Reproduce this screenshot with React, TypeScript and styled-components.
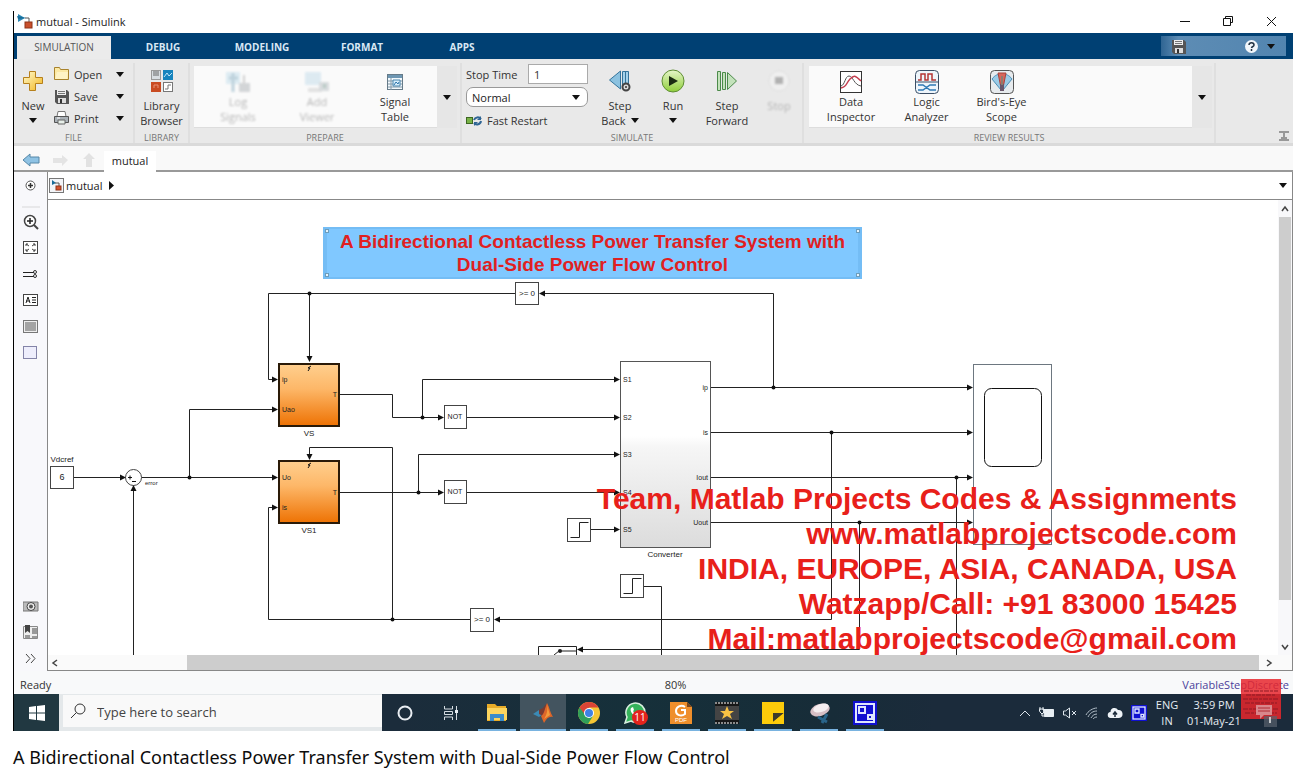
import React from "react";
import styled, { createGlobalStyle, css } from "styled-components";

const uiFont = `"Open Sans", "Noto Sans", sans-serif`;

const GlobalStyle = createGlobalStyle`
  * { box-sizing: border-box; }
  body { margin: 0; background: #fff; color: #222; font-family: ${uiFont}; font-size: 11px; }
  button, input, select { font: inherit; color: inherit; }
  button { border: 0; padding: 0; background: none; }
  svg { display: block; flex: none; }
`;

const Page = styled.main`
  padding: 11px 12px 0 13px;
`;

const AppWindow = styled.section`
  display: flex;
  flex-direction: column;
  border-left: 1px solid #000;
`;

/* Title bar */

const TitleBar = styled.header`
  display: flex;
  align-items: center;
  height: 22px;
  padding: 0 16px 2px 3px;
  gap: 3px;
`;

const WindowTitle = styled.h1`
  flex: 1;
  margin: 0;
  font-size: 11px;
  font-weight: 400;
`;

const WindowControls = styled.div`
  display: flex;
  gap: 32px;
`;

/* Ribbon tabs */

const TabBar = styled.nav`
  display: flex;
  align-items: stretch;
  height: 26px;
  padding: 3px 7px 0 3px;
  background: #004073;
`;

const RibbonTab = styled.button<{ $active?: boolean; $width: number }>`
  width: ${(p) => p.$width}px;
  padding-bottom: 2px;
  font-size: 10px;
  font-weight: ${(p) => (p.$active ? 400 : 700)};
  color: ${(p) => (p.$active ? "#555" : "#d9e8f5")};
  background: ${(p) => (p.$active ? "#ebebeb" : "transparent")};
`;

const QuickAccess = styled.div`
  display: flex;
  align-items: center;
  justify-content: space-between;
  width: 125px;
  height: 20px;
  margin-left: auto;
  padding: 0 11px 0 10px;
  background: linear-gradient(90deg, #2f6593, #5d8cb4 14%, #5285b0);
`;

const QuickRight = styled.div`
  display: flex;
  align-items: center;
  gap: 9px;
`;

/* Ribbon */

const Ribbon = styled.div`
  display: flex;
  height: 87px;
  padding-top: 4px;
  background: #e9e9e9;
  border-bottom: 3px solid #dadada;
`;

const Section = styled.section<{ $width?: number }>`
  display: flex;
  flex-direction: column;
  flex: ${(p) => (p.$width ? "none" : 1)};
  width: ${(p) => (p.$width ? `${p.$width}px` : "auto")};
  border-right: ${(p) => (p.$width ? "2px solid #dfdfdf" : "0")};
`;

const SectionBody = styled.div<{ $pad?: string }>`
  display: flex;
  flex: none;
  height: 68px;
  padding: ${(p) => p.$pad ?? "0"};
`;

const SectionLabel = styled.h2`
  margin: 0;
  font-size: 9px;
  line-height: 14px;
  font-weight: 400;
  text-align: center;
  color: #777;
`;

const BigButton = styled.button<{ $width: number; $faded?: boolean }>`
  display: flex;
  flex-direction: column;
  align-items: center;
  width: ${(p) => p.$width}px;
  padding-top: 6px;
  line-height: 15px;
  color: #333;
  ${(p) =>
    p.$faded &&
    css`
      opacity: 0.3;
      filter: blur(1px);
    `}
`;

const BigIcon = styled.span`
  display: grid;
  place-items: center;
  width: 24px;
  height: 24px;
  margin-bottom: 5px;
`;

const InlineArrow = styled.span`
  display: flex;
  align-items: center;
  justify-content: center;
  gap: 5px;
  min-height: 15px;
`;

const SmallColumn = styled.div`
  display: flex;
  flex-direction: column;
  width: 72px;
  padding-left: 2px;
`;

const SmallButton = styled.button`
  display: flex;
  align-items: center;
  gap: 5px;
  height: 22px;
  text-align: left;
  color: #333;
`;

const SmallText = styled.span`
  flex: 1;
`;

const Gallery = styled.div<{ $inset?: number }>`
  display: flex;
  flex: 1;
  height: 62px;
  background: #fafafa;
  border-bottom: 1px solid #ddd;
  padding-left: ${(p) => p.$inset ?? 0}px;
`;

const GalleryItem = styled.button<{ $faded?: boolean; $width: number }>`
  display: flex;
  flex-direction: column;
  align-items: center;
  width: ${(p) => p.$width}px;
  padding-top: 4px;
  line-height: 15px;
  color: #333;
  ${(p) =>
    p.$faded &&
    css`
      opacity: 0.35;
      filter: blur(1px);
    `}
`;

const GalleryIcon = styled.span`
  display: grid;
  place-items: center;
  height: 24px;
`;

const GalleryMore = styled.button`
  display: grid;
  place-items: center;
  width: 20px;
  height: 62px;
  background: #e6e6e6;
`;

const RunSettings = styled.div`
  display: flex;
  flex-direction: column;
  width: 122px;
  gap: 3px;
  padding-top: 1px;
`;

const StopTimeRow = styled.label`
  display: flex;
  align-items: center;
  justify-content: space-between;
  height: 20px;
  color: #333;
`;

const StopTimeInput = styled.input`
  width: 60px;
  height: 20px;
  padding: 0 5px;
  border: 1px solid #aaa;
  background: #fff;
`;

const ModeBox = styled.div`
  display: flex;
  align-items: center;
  height: 21px;
  padding-right: 7px;
  border: 1px solid #999;
  border-radius: 7px;
  background: #fff;
`;

const ModeSelect = styled.select`
  flex: 1;
  height: 18px;
  padding: 0 5px;
  border: 0;
  appearance: none;
  background: transparent;
`;

const RibbonEnd = styled.div`
  display: flex;
  flex: 1;
  align-items: flex-end;
  justify-content: flex-end;
  padding: 0 3px 1px 0;
`;

/* Document bar */

const DocumentBar = styled.div`
  display: flex;
  align-items: stretch;
  height: 26px;
  padding: 0 0 0 8px;
  background: #f9f9f9;
  border-bottom: 2px solid #999;
`;

const NavButtons = styled.div`
  display: flex;
  align-items: center;
  gap: 11px;
  width: 82px;
  padding-top: 4px;
`;

const NavButton = styled.button`
  width: 18px;
`;

const DocumentTab = styled.button`
  width: 52px;
  margin: 5px 0 -2px;
  padding-bottom: 2px;
  background: #fff;
`;

/* Editor */

const Editor = styled.div`
  display: flex;
`;

const Palette = styled.aside`
  display: flex;
  flex-direction: column;
  align-items: center;
  width: 33px;
  padding-top: 4px;
  background: #f8f8fb;
`;

const PaletteButton = styled.button`
  display: grid;
  place-items: center;
  width: 20px;
  height: 18px;
  margin-bottom: 8px;
  &:last-child { margin-bottom: 4px; }
`;

const PaletteRule = styled.hr`
  width: 18px;
  height: 2px;
  margin: 4px 0 5px;
  border: 0;
  background: #e8e8ea;
`;

const PaletteSpacer = styled.div`
  flex: 1;
`;

const EditorMain = styled.div`
  display: flex;
  flex-direction: column;
  flex: 1;
  min-width: 0;
  border: 1px solid #888;
  border-top: 0;
`;

const Breadcrumb = styled.div`
  display: flex;
  align-items: center;
  gap: 2px;
  height: 28px;
  padding: 0 5px 0 1px;
  border-bottom: 1px solid #888;
  background: #fff;
`;

const BreadcrumbFill = styled.span`
  flex: 1;
`;

const CanvasRow = styled.div`
  display: flex;
`;

const Canvas = styled.div`
  position: relative;
  flex: 1;
  min-width: 0;
  overflow: hidden;
  background: #fff;
`;

const Annotation = styled.p`
  position: absolute;
  left: 275px;
  top: 27px;
  width: 539px;
  height: 52px;
  margin: 0;
  padding-top: 1px;
  border: 4px solid #74bdf5;
  border-width: 2px 4px;
  background: #80c8ff;
  color: #e01f22;
  font: bold 19px/23px "Liberation Sans", Arial, sans-serif;
  text-align: center;
  white-space: nowrap;
`;

const Handle = styled.i<{ $right?: boolean; $bottom?: boolean }>`
  position: absolute;
  width: 4px;
  height: 4px;
  border: 1px solid #6d9dbb;
  background: #e4f4ff;
  ${(p) => (p.$right ? "right: -2px;" : "left: -2px;")}
  ${(p) => (p.$bottom ? "bottom: 0;" : "top: 0;")}
`;

const Watermark = styled.address`
  position: absolute;
  right: 41px;
  top: 281px;
  color: #e8201a;
  font: bold 30px/35px "Liberation Sans", Arial, sans-serif;
  text-align: right;
  white-space: nowrap;
`;

const VScroll = styled.div`
  display: flex;
  flex-direction: column;
  align-items: center;
  justify-content: space-between;
  width: 14px;
  padding: 5px 0 4px;
  background: #f8f8fa;
`;

const VThumb = styled.div`
  flex: 1;
  width: 12px;
  margin: 4px 0 43px;
  background: #cdcdcd;
`;

const HScroll = styled.div`
  display: flex;
  align-items: center;
  height: 15px;
  padding: 0 19px 0 3px;
  background: #fafafa;
`;

const HThumb = styled.div`
  flex: 1;
  height: 15px;
  margin: 0 6px 0 128px;
  background: #cdcdcd;
`;

const StatusBar = styled.footer`
  display: grid;
  grid-template-columns: 1fr auto 1fr;
  align-items: center;
  height: 23px;
  padding: 4px 4px 0 6px;
  background: #f8f9fa;
  color: #333;
`;

const Solver = styled.a`
  color: #4b3f9a;
  text-align: right;
  text-decoration: none;
`;

const CanvasZoom = styled.span`
  padding-left: 42px;
`;

/* Taskbar */

const Taskbar = styled.div`
  display: flex;
  height: 37px;
  background: linear-gradient(90deg, #1b2c3b 30%, #16303a 48%, #172c38 64%, #1b2b3b 72%);
  color: #e6ecf2;
`;

const StartButton = styled.button`
  display: grid;
  place-items: center;
  width: 45px;
  background: #213841;
`;

const SearchBox = styled.label`
  display: flex;
  align-items: center;
  gap: 9px;
  width: 323px;
  padding: 0 8px 0 7px;
  border: solid #e4e8ea;
  border-width: 1px 0 4px 4px;
  background: #f9f9f9;
  color: #333;
`;

const SearchInput = styled.input`
  flex: 1;
  min-width: 0;
  padding: 2px 0 0 2px;
  border: 0;
  background: transparent;
  font-size: 13px;
  &::placeholder { color: #444; opacity: 1; }
`;

const TaskButton = styled.button<{ $open?: boolean; $current?: boolean }>`
  display: flex;
  flex-direction: column;
  align-items: center;
  justify-content: center;
  position: relative;
  width: 46px;
  background: ${(p) => (p.$current ? "#43545f" : "transparent")};
  ${(p) =>
    p.$open &&
    css`
      &::after {
        content: "";
        position: absolute;
        bottom: 0;
        width: ${p.$current ? "46px" : "38px"};
        height: 2px;
        background: #79b3e0;
      }
    `}
`;

const Badge = styled.span`
  position: absolute;
  left: 20px;
  top: 16px;
  width: 16px;
  height: 15px;
  border-radius: 8px;
  background: #e3231c;
  color: #fff;
  font-size: 10px;
  line-height: 15px;
`;

const Tray = styled.div`
  display: flex;
  align-items: center;
  gap: 8px;
  margin-left: auto;
`;

const TrayText = styled.div<{ $width: number }>`
  width: ${(p) => p.$width}px;
  line-height: 16px;
  text-align: center;
`;

const TrayClock = styled.div`
  display: flex;
  gap: 5px;
`;

const ActionCenter = styled.button`
  position: relative;
  align-self: stretch;
  width: 49px;
  margin-left: -8px;
`;

const RedNote = styled.span`
  position: absolute;
  left: -3px;
  top: -15px;
`;

const Caption = styled.h2`
  margin: 13px 0 0;
  font: 400 18px/26px "Noto Sans", sans-serif;
  color: #0c0c0c;
`;

/* Icons */

const Down = ({ fill = "#111" }: { fill?: string }) => (
  <svg width="8" height="5" viewBox="0 0 8 5"><path d="M0 0h8L4 5z" fill={fill} /></svg>
);

const ModelIcon = () => (
  <svg width="16" height="15" viewBox="0 0 16 15">
    <path d="M1 0v8l7-4z" fill="#2a87b4" />
    <path d="M0 2l9 2-8 1z" fill="#176b98" />
    <path d="M8 4h4v4" fill="none" stroke="#555" />
    <rect x="8" y="8" width="7" height="6" fill="#c9502c" stroke="#8f3316" />
  </svg>
);

const FramedModelIcon = () => (
  <svg width="15" height="15" viewBox="0 0 15 15">
    <rect x=".5" y=".5" width="14" height="14" fill="#f3f5f8" stroke="#777" />
    <path d="M3 2v5l4-2z" fill="#176b98" />
    <path d="M6 5h4v3" fill="none" stroke="#555" />
    <rect x="7" y="8" width="5" height="4" fill="#d4522d" stroke="#8f3316" />
  </svg>
);

const NewIcon = () => (
  <svg width="22" height="22" viewBox="0 0 22 22">
    <defs><linearGradient id="gold" x1="0" y1="0" x2="1" y2="1"><stop stopColor="#fffbd0" /><stop offset="1" stopColor="#f2b51d" /></linearGradient></defs>
    <path d="M7.500 1.500h6v6h7v6h-7v7h-6v-7h-6v-6h6z" fill="url(#gold)" stroke="#b6801c" />
  </svg>
);

const OpenIcon = () => (
  <svg width="15" height="14" viewBox="0 0 15 14">
    <path d="M.5 12.500v-12h5l1 2h8v10z" fill="#fce9a4" stroke="#a8822c" />
    <path d="M3 5h11l-1 7H1z" fill="#fff3c4" />
  </svg>
);

const SaveIcon = () => (
  <svg width="15" height="15" viewBox="0 0 15 15">
    <path d="M1 1h12l2 2v12H3l-2-2z" fill="#555" />
    <path d="M3 1h9v5H3z" fill="#eee" /><path d="M4 2.500h7M4 4.500h7" stroke="#777" />
    <path d="M4 9h8v5H4z" fill="#ddd" /><path d="M6 10h2v4H6z" fill="#333" />
  </svg>
);

const PrintIcon = () => (
  <svg width="15" height="14" viewBox="0 0 15 14">
    <path d="M4 .5h7l1 5H3z" fill="#fff" stroke="#777" />
    <path d="M.5 5.500h14v6H.5z" fill="#aab1b7" stroke="#555" />
    <path d="M4 9h7v4H4z" fill="#e7efe9" stroke="#666" /><path d="M3 7h3" stroke="#fff" />
  </svg>
);

const LibraryIcon = () => (
  <svg width="22" height="22" viewBox="0 0 22 22">
    <rect x=".5" y=".5" width="9" height="9" fill="#d8dde1" stroke="#999" /><path d="M3 1v5M5 1v5M7 1v5" stroke="#666" />
    <rect x="12" y="0" width="10" height="10" fill="#1683bd" /><path d="M13 7l3-4 2 3 3-3" stroke="#bfe5fa" fill="none" />
    <rect x="0" y="12" width="10" height="10" fill="#c94b22" /><path d="M3 18v-3h4v3" stroke="#e99275" fill="none" />
    <rect x="12.500" y="12.500" width="9" height="9" fill="#fff" stroke="#777" /><path d="M14 19h3v-4h3" stroke="#777" fill="none" />
  </svg>
);

const PaleSignalIcon = () => (
  <svg width="26" height="24" viewBox="0 0 26 24">
    <path d="M1 2h14v12H1z" fill="#a8d1e5" /><path d="M8 3v19M4 8h9" stroke="#518aa6" strokeWidth="3" />
    <path d="M14 13h11v9H14z" fill="#8c9399" /><path d="M19 5v9" stroke="#888" strokeWidth="2" />
  </svg>
);

const PaleViewerIcon = () => (
  <svg width="26" height="24" viewBox="0 0 26 24">
    <path d="M1 2h16v13H1z" fill="#a8cfe3" /><path d="M4 18h14v4H4z" fill="#b5b5b5" />
    <path d="M15 12h10v9H15z" fill="#9aa4aa" /><path d="M19 14h3v4h-3z" fill="#476" />
  </svg>
);

const SignalTableIcon = () => (
  <svg width="16" height="16" viewBox="0 0 16 16">
    <rect x=".5" y=".5" width="15" height="15" fill="#f3f9fd" stroke="#667b89" />
    <path d="M1 1h14v3H1z" fill="#6e97b3" /><path d="M1 7h14M1 10h14M1 13h14M4 4v12" stroke="#8299a8" />
    <path d="M6 6h7v6H6z" fill="#d5ecfa" stroke="#4a86ad" /><path d="M7 11l2-3 2 2 1-2" fill="none" stroke="#2f78ae" />
  </svg>
);

const RestartIcon = () => (
  <svg width="16" height="12" viewBox="0 0 16 12">
    <rect x=".5" y="2.500" width="6" height="6" fill="#79b347" stroke="#3d6722" />
    <path d="M8 5a4 4 0 0 1 7-1M15 6a4 4 0 0 1-7 2" fill="none" stroke="#2f6594" strokeWidth="2" />
    <path d="M15 1v4h-4zM8 11V7h4z" fill="#2f6594" />
  </svg>
);

const StepBackIcon = () => (
  <svg width="22" height="22" viewBox="0 0 22 22">
    <path d="M11.500 1v18L.5 10z" fill="#8cc2e0" stroke="#35749b" />
    <path d="M13.500 1.500h6v17h-6z" fill="#a6d2ea" stroke="#35749b" /><path d="M16.500 2v14" stroke="#35749b" />
    <circle cx="17" cy="17" r="3.500" fill="#ddd" stroke="#444" strokeWidth="2" /><circle cx="17" cy="17" r="1" fill="#333" />
  </svg>
);

const RunIcon = () => (
  <svg width="24" height="24" viewBox="0 0 24 24">
    <defs><linearGradient id="run" x1="0" y1="0" x2="0" y2="1"><stop stopColor="#e6f6c9" /><stop offset="1" stopColor="#8fce3a" /></linearGradient></defs>
    <circle cx="12" cy="12" r="11" fill="url(#run)" stroke="#5e8d33" />
    <path d="M8 7l9 5-9 5z" fill="#1b2c12" />
  </svg>
);

const StepForwardIcon = () => (
  <svg width="22" height="22" viewBox="0 0 22 22">
    <path d="M1.500 1.500h3v19h-3zM6.500 2.500h3v17h-3z" fill="#c3e2bb" stroke="#4c8a4a" />
    <path d="M11.500 2.500v17l9-8.500z" fill="#c3e2bb" stroke="#4c8a4a" />
  </svg>
);

const StopIcon = () => (
  <svg width="24" height="24" viewBox="0 0 24 24">
    <circle cx="12" cy="12" r="10" fill="#fff" stroke="#c5c5c5" /><rect x="8" y="8" width="8" height="7" fill="#333" />
  </svg>
);

const DataInspectorIcon = () => (
  <svg width="22" height="22" viewBox="0 0 22 22">
    <rect x=".5" y=".5" width="21" height="21" fill="#fff" stroke="#333" />
    <path d="M1 15C5 14 5 5 9 5s5 9 12 10" fill="none" stroke="#555" />
    <path d="M1 17c6-1 5-5 9-9s5-4 11 2" fill="none" stroke="#c33d4e" strokeWidth="1.500" />
  </svg>
);

const LogicIcon = () => (
  <svg width="24" height="24" viewBox="0 0 24 24">
    <rect x=".5" y=".5" width="23" height="23" rx="4" fill="#eef5fb" stroke="#3b4e66" />
    <path d="M3 10h3V4h4v6h3V4h4v6h4" fill="none" stroke="#b53434" strokeWidth="1.500" />
    <path d="M1 12h22" stroke="#3b4e66" /><path d="M3 15h5l7 5h6M3 20h5l7-5h6" fill="none" stroke="#2f79b5" strokeWidth="1.500" />
  </svg>
);

const BirdsEyeIcon = () => (
  <svg width="24" height="24" viewBox="0 0 24 24">
    <rect x=".5" y=".5" width="23" height="23" rx="4" fill="#e7ebee" stroke="#555" />
    <path d="M2 9c3-4 6-5 10-5s7 1 10 5l-9 11h-2z" fill="#9bcbe6" stroke="#4b8eb7" />
    <path d="M8 3h8l-3 15h-2z" fill="#d8665b" stroke="#a8433c" /><path d="M10 14h4v7h-4z" fill="#69566c" /><path d="M11 6h2v9h-2z" fill="#8e7c70" />
  </svg>
);

const StepGlyph = ({ x, y }: { x: number; y: number }) => (
  <g fill="none">
    <rect x={x} y={y} width="23" height="23" fill="#fff" stroke="#444" />
    <path d={`M${x + 3} ${y + 19}h9v-15h9`} stroke="#222" />
  </g>
);

/* Block diagram */

const wires = [
  "M515 293.500H268.500V379.500H272", "M309.500 293.500V357", "M773.500 387.500V293.500H545",
  "M340 394.500H392.500V417.500H438", "M422.500 417.500V379.500H614", "M467 417.500H614",
  "M392.500 619.500V447.500H309.500V454", "M340 492.500H438", "M418.500 492.500V454.500H614", "M467 492.500H614",
  "M73 477.500H120", "M141 477.500H272", "M189.500 477.500V409.500H272", "M133.500 655V491",
  "M470 619.500H268.500V507.500H272", "M831.500 432.500V619.500H500",
  "M711 387.500H967", "M711 432.500H967", "M711 477.500H967", "M711 522.500H967",
  "M956.500 477.500V655", "M859.500 522.500V649.500H583", "M591 529.500H614", "M643 586.500H661.500V655",
];

const dots = [[309.5, 293.5], [422.5, 417.5], [418.5, 492.5], [189.5, 477.5], [392.5, 619.5], [773.5, 387.5], [831.5, 432.5], [956.5, 477.5], [859.5, 522.5]];

const arrows: [number, number, number][] = [
  [278, 379.5, 0], [278, 409.5, 0], [278, 477.5, 0], [278, 507.5, 0], [126, 477.5, 0], [444, 417.5, 0], [444, 492.5, 0],
  [620, 379.5, 0], [620, 417.5, 0], [620, 454.5, 0], [620, 492.5, 0], [620, 529.5, 0],
  [973, 387.5, 0], [973, 432.5, 0], [973, 477.5, 0], [973, 522.5, 0],
  [309.5, 362, 90], [309.5, 460, 90], [133.5, 485, -90], [539, 293.5, 180], [494, 619.5, 180], [577, 649.5, 180],
];

const labels: { x: number; y: number; t: string; s?: number; a?: "middle" | "end" }[] = [
  { x: 282, y: 382, t: "ip" }, { x: 282, y: 412, t: "Uao" }, { x: 337, y: 397, t: "T", a: "end" },
  { x: 282, y: 480, t: "Uo" }, { x: 282, y: 510, t: "is" }, { x: 337, y: 495, t: "T", a: "end" },
  { x: 309, y: 436, t: "VS", a: "middle", s: 8 }, { x: 309, y: 533, t: "VS1", a: "middle", s: 8 },
  { x: 62, y: 462, t: "Vdcref", a: "middle", s: 8 }, { x: 62, y: 480, t: "6", a: "middle", s: 9 }, { x: 145, y: 485, t: "error", s: 6 },
  { x: 455, y: 419, t: "NOT", a: "middle", s: 7 }, { x: 455, y: 494, t: "NOT", a: "middle", s: 7 },
  { x: 527, y: 296, t: ">= 0", a: "middle", s: 8 }, { x: 482, y: 622, t: ">= 0", a: "middle", s: 8 },
  { x: 623, y: 382, t: "S1" }, { x: 623, y: 420, t: "S2" }, { x: 623, y: 457, t: "S3" }, { x: 623, y: 495, t: "S4" }, { x: 623, y: 532, t: "S5" },
  { x: 708, y: 390, t: "ip", a: "end" }, { x: 708, y: 435, t: "is", a: "end" }, { x: 708, y: 480, t: "Iout", a: "end" }, { x: 708, y: 525, t: "Uout", a: "end" },
  { x: 665, y: 557, t: "Converter", a: "middle", s: 8 },
];

const Diagram = () => (
  <svg width="1230" height="455" viewBox="48 200 1230 455" role="img" aria-label="Block diagram">
    <defs>
      <linearGradient id="orange" x1="0" y1="0" x2="0" y2="1"><stop stopColor="#ffcf8e" /><stop offset=".4" stopColor="#fdb768" /><stop offset="1" stopColor="#ee7203" /></linearGradient>
      <linearGradient id="grey" x1="0" y1="0" x2="0" y2="1"><stop offset=".4" stopColor="#fff" /><stop offset=".46" stopColor="#f6f6f6" /><stop offset="1" stopColor="#dcdcdc" /></linearGradient>
    </defs>
    <g fill="none" stroke="#222">{wires.map((d) => <path key={d} d={d} />)}</g>
    <g fill="url(#orange)" stroke="#2a1a08" strokeWidth="2">
      <rect x="279" y="364" width="60" height="62" /><rect x="279" y="461" width="60" height="62" />
    </g>
    <path d="M311 366l-3 2h2l-2 3M311 463l-3 2h2l-2 3" fill="none" stroke="#111" />
    <rect x="620.500" y="361.500" width="90" height="186" fill="url(#grey)" stroke="#555" />
    <g fill="#fff" stroke="#444">
      <rect x="444.500" y="405.500" width="22" height="23" /><rect x="444.500" y="480.500" width="22" height="23" />
      <rect x="50.500" y="466.500" width="23" height="22" /><rect x="515.500" y="282.500" width="23" height="22" />
      <rect x="470.500" y="608.500" width="23" height="23" /><circle cx="133.500" cy="477.500" r="8" />
      <rect x="973.500" y="364.500" width="78" height="180" stroke="#6d7780" />
      <rect x="984.500" y="388.500" width="57" height="78" rx="7" stroke="#111" />
    </g>
    <path d="M128 477.500h4M130 475.500v4M132 481.500h4" stroke="#111" />
    <StepGlyph x={567.5} y={518.5} />
    <StepGlyph x={620.5} y={574.5} />
    <path d="M538.500 655v-8.500h38v8.500M554 655l5-4h17" fill="none" stroke="#222" /><circle cx="560" cy="651" r="2" fill="#222" />
    {dots.map(([x, y]) => <circle key={`${x}-${y}`} cx={x} cy={y} r="2" fill="#111" />)}
    {arrows.map(([x, y, r]) => <path key={`${x}-${y}`} d="M0 0l-6-3v6z" transform={`translate(${x} ${y}) rotate(${r})`} fill="#111" />)}
    <g fontFamily="Liberation Sans, sans-serif" fill="#222">
      {labels.map((l) => <text key={`${l.x}-${l.y}`} x={l.x} y={l.y} fontSize={l.s ?? 7} textAnchor={l.a}>{l.t}</text>)}
    </g>
  </svg>
);

const Chevron = ({ d }: { d: string }) => (
  <svg width="8" height="8" viewBox="0 0 8 8"><path d={d} fill="none" stroke="#444" strokeWidth="1.500" /></svg>
);

const paletteTools = [
  { name: "Zoom", icon: <><circle cx="7" cy="7" r="5.500" fill="#fff" stroke="#444" strokeWidth="1.500" /><path d="M4 7h6M7 4v6" stroke="#222" strokeWidth="1.500" /><path d="M11 11l4 4" stroke="#444" strokeWidth="2" /></> },
  { name: "Fit to view", icon: <><rect x=".5" y="1.500" width="14" height="12" fill="#fff" stroke="#444" /><path d="M3 6V4h2M10 4h2v2M3 9v2h2M12 9v2h-2M3 4l3 2M12 4L9 6M3 11l3-2M12 11L9 9" fill="none" stroke="#444" /></> },
  { name: "Line style", icon: <><path d="M0 6.500h11M0 10.500h11" stroke="#222" /><circle cx="12" cy="6" r="1.500" fill="none" stroke="#333" /><circle cx="12" cy="10" r="1.500" fill="none" stroke="#333" /></> },
  { name: "Annotation", icon: <><rect x=".5" y="2.500" width="14" height="11" fill="#fff" stroke="#444" /><path d="M3 11l2-6 2 6M3 9h4M9 5.500h4M9 8h4M9 10.500h4" fill="none" stroke="#222" /></> },
  { name: "Image", icon: <><rect x=".5" y="2.500" width="14" height="12" fill="#eee" stroke="#777" /><path d="M2 4h11v9H2z" fill="#a4a4a4" /></> },
  { name: "Area", icon: <rect x=".5" y="2.500" width="13" height="12" fill="#eeeefc" stroke="#8484a8" /> },
];

const PaletteSvg = ({ children }: { children: React.ReactNode }) => (
  <svg width="16" height="16" viewBox="0 0 16 16">{children}</svg>
);

const SharedScreen = ({ size }: { size: number }) => (
  <svg width={size} height={size} viewBox="0 0 24 24">
    <path d="M0 0h24v24H0z" fill="#1010d0" /><rect x="3" y="3" width="18" height="18" fill="none" stroke="#dfe6ff" strokeWidth="2" />
    <path d="M6 6h6v6H6z" fill="none" stroke="#dfe6ff" strokeWidth="2" /><path d="M15 14h4v4h-4z" fill="none" stroke="#dfe6ff" strokeWidth="2" />
  </svg>
);

const taskIcons = [
  { name: "Cortana", icon: <svg width="16" height="16" viewBox="0 0 16 16"><circle cx="8" cy="8" r="6.500" fill="none" stroke="#e8edf2" strokeWidth="2" /></svg> },
  { name: "Task view", icon: <svg width="16" height="16" viewBox="0 0 16 16"><path d="M1.500 1v3h8V1M1.500 15v-3h8v3M1.500 6.500h8v3h-8zM13.500 1v14" fill="none" stroke="#d4dce2" /><path d="M12 5h3v3h-3z" fill="#e8edf2" /></svg> },
  { name: "File Explorer", open: true, icon: <svg width="20" height="18" viewBox="0 0 20 18"><path d="M0 0h8l2 2h9v15H0z" fill="#e8ac28" /><path d="M0 4h20v12H0z" fill="#fcd55e" /><path d="M3 17v-7h14v7h-4v-3H7v3z" fill="#3b8cc9" /></svg> },
  { name: "MATLAB", open: true, current: true, icon: <svg width="20" height="20" viewBox="0 0 20 20"><path d="M0 11l6-4 4 4-4 3z" fill="#3b8ab5" /><path d="M6 7l4-2 4-5-4 13-4-2z" fill="#7b3a31" /><path d="M14 0c3 5 3 10 6 14-4-1-6 1-9 6l-3-7c3-1 4-8 6-13z" fill="#df6628" /><path d="M14 2c1 5 0 9-3 14l6-4z" fill="#f39a3a" /></svg> },
  { name: "Chrome", open: true, icon: <svg width="22" height="22" viewBox="0 0 22 22"><circle cx="11" cy="11" r="11" fill="#f4c534" /><path d="M1.500 5.500A11 11 0 0 1 20.500 5.500H11L6 13z" fill="#db4437" /><path d="M1.500 5.500A11 11 0 0 0 10 22l5-8-7 0z" fill="#2f9f5a" /><circle cx="11" cy="11" r="5" fill="#fff" /><circle cx="11" cy="11" r="4" fill="#3f82e4" /></svg> },
  { name: "WhatsApp", open: true, badge: "11", icon: <svg width="22" height="22" viewBox="0 0 22 22"><path d="M1 21l2-6A9.500 9.500 0 1 1 7 19z" fill="#35b35b" stroke="#d9efe0" strokeWidth="1.500" /><path d="M7 6c-2 3 3 9 8 9l1-2-3-2-2 1-2-3 1-1-1-3z" fill="#fff" /></svg> },
  { name: "PDF reader", open: true, icon: <svg width="22" height="24" viewBox="0 0 22 24"><path d="M0 1h17l5 5v17H0z" fill="#ef8f2c" /><path d="M17 1l5 5h-5z" fill="#7b461b" /><path d="M15 6c-4-3-9 0-9 4s5 6 9 3v-4h-4" fill="none" stroke="#fff" strokeWidth="2" /><text x="11" y="21" fontSize="6" fill="#fff" textAnchor="middle" fontFamily="Liberation Sans, sans-serif">PDF</text></svg> },
  { name: "Movie editor", open: true, icon: <svg width="24" height="22" viewBox="0 0 24 22"><path d="M0 0h24v22H0z" fill="#171717" /><path d="M0 4h24v14H0z" fill="#444" /><path d="M0 1h24M0 21h24" stroke="#fff" strokeDasharray="2 1" /><path d="M12 4l2 5h5l-4 3 2 5-5-3-5 3 2-5-4-3h5z" fill="#f8c244" /></svg> },
  { name: "Sticky Notes", open: true, icon: <svg width="22" height="22" viewBox="0 0 22 22"><path d="M0 0h22v22H0z" fill="#fccb0a" /><path d="M11 20V11h11z" fill="#3d3a2b" /><path d="M11 20L22 11v9z" fill="#fccb0a" /></svg> },
  { name: "Snipping tool", open: true, icon: <svg width="24" height="22" viewBox="0 0 24 22"><ellipse cx="13" cy="8" rx="10" ry="6" transform="rotate(-18 13 8)" fill="#d7bfc5" /><ellipse cx="14" cy="6" rx="8" ry="4" transform="rotate(-18 14 6)" fill="#f5eef0" /><path d="M11 15l9 5M20 12l-5 9" stroke="#29648a" strokeWidth="3" /></svg> },
  { name: "Screen share", open: true, icon: <SharedScreen size={24} /> },
];

const fileActions = [
  { name: "Open", icon: <OpenIcon /> },
  { name: "Save", icon: <SaveIcon /> },
  { name: "Print", icon: <PrintIcon /> },
];

export default function App() {
  return (
    <>
      <GlobalStyle />
      <Page>
        <AppWindow>
          <TitleBar>
            <ModelIcon />
            <WindowTitle>mutual - Simulink</WindowTitle>
            <WindowControls>
              <button aria-label="Minimize"><svg width="11" height="11" viewBox="0 0 11 11"><path d="M0 5.500h10" stroke="#111" /></svg></button>
              <button aria-label="Restore"><svg width="11" height="11" viewBox="0 0 11 11"><path d="M2.500 2.500v-2h7v6h-2M.5 2.500h7v7h-7z" fill="none" stroke="#111" /></svg></button>
              <button aria-label="Close"><svg width="11" height="11" viewBox="0 0 11 11"><path d="M1 1l9 9M10 1l-9 9" stroke="#111" /></svg></button>
            </WindowControls>
          </TitleBar>

          <TabBar>
            <RibbonTab $active $width={94}>SIMULATION</RibbonTab>
            <RibbonTab $width={104}>DEBUG</RibbonTab>
            <RibbonTab $width={94}>MODELING</RibbonTab>
            <RibbonTab $width={106}>FORMAT</RibbonTab>
            <RibbonTab $width={94}>APPS</RibbonTab>
            <QuickAccess>
              <button aria-label="Quick save"><SaveIcon /></button>
              <QuickRight>
                <button aria-label="Help"><svg width="13" height="13" viewBox="0 0 13 13"><circle cx="6.500" cy="6.500" r="6.500" fill="#f2f7fb" /><path d="M4 5c0-3 5-3 5 0 0 2-2 1-2.500 3M6.500 9v2" fill="none" stroke="#234" strokeWidth="1.500" /></svg></button>
                <button aria-label="Help menu"><Down /></button>
              </QuickRight>
            </QuickAccess>
          </TabBar>

          <Ribbon>
            <Section $width={121}>
              <SectionBody>
                <BigButton $width={38}>
                  <BigIcon><NewIcon /></BigIcon>
                  New
                  <InlineArrow><Down /></InlineArrow>
                </BigButton>
                <SmallColumn>
                  {fileActions.map((a) => (
                    <SmallButton key={a.name}>{a.icon}<SmallText>{a.name}</SmallText><Down /></SmallButton>
                  ))}
                </SmallColumn>
              </SectionBody>
              <SectionLabel>FILE</SectionLabel>
            </Section>
            <Section $width={55}>
              <SectionBody>
                <BigButton $width={53}>
                  <BigIcon><LibraryIcon /></BigIcon>
                  Library<br />Browser
                </BigButton>
              </SectionBody>
              <SectionLabel>LIBRARY</SectionLabel>
            </Section>
            <Section $width={272}>
              <SectionBody $pad="3px 3px 0 4px">
                <Gallery $inset={4}>
                  <GalleryItem $width={80} $faded disabled><GalleryIcon><PaleSignalIcon /></GalleryIcon>Log<br />Signals</GalleryItem>
                  <GalleryItem $width={78} $faded disabled><GalleryIcon><PaleViewerIcon /></GalleryIcon>Add<br />Viewer</GalleryItem>
                  <GalleryItem $width={78}><GalleryIcon><SignalTableIcon /></GalleryIcon>Signal<br />Table</GalleryItem>
                </Gallery>
                <GalleryMore aria-label="More prepare tools"><Down /></GalleryMore>
              </SectionBody>
              <SectionLabel>PREPARE</SectionLabel>
            </Section>
            <Section $width={342}>
              <SectionBody $pad="0 0 0 4px">
                <RunSettings>
                  <StopTimeRow>Stop Time<StopTimeInput defaultValue="1" /></StopTimeRow>
                  <ModeBox>
                    <ModeSelect aria-label="Simulation mode"><option>Normal</option></ModeSelect>
                    <Down />
                  </ModeBox>
                  <SmallButton><RestartIcon />Fast Restart</SmallButton>
                </RunSettings>
                <BigButton $width={64}><BigIcon><StepBackIcon /></BigIcon>Step<InlineArrow>Back <Down /></InlineArrow></BigButton>
                <BigButton $width={42}><BigIcon><RunIcon /></BigIcon>Run<InlineArrow><Down /></InlineArrow></BigButton>
                <BigButton $width={66}><BigIcon><StepForwardIcon /></BigIcon>Step<br />Forward</BigButton>
                <BigButton $width={38} $faded disabled><BigIcon><StopIcon /></BigIcon>Stop</BigButton>
              </SectionBody>
              <SectionLabel>SIMULATE</SectionLabel>
            </Section>
            <Section $width={412}>
              <SectionBody $pad="3px 2px 0 5px">
                <Gallery $inset={4}>
                  <GalleryItem $width={76}><GalleryIcon><DataInspectorIcon /></GalleryIcon>Data<br />Inspector</GalleryItem>
                  <GalleryItem $width={75}><GalleryIcon><LogicIcon /></GalleryIcon>Logic<br />Analyzer</GalleryItem>
                  <GalleryItem $width={75}><GalleryIcon><BirdsEyeIcon /></GalleryIcon>Bird's-Eye<br />Scope</GalleryItem>
                </Gallery>
                <GalleryMore aria-label="More review tools"><Down /></GalleryMore>
              </SectionBody>
              <SectionLabel>REVIEW RESULTS</SectionLabel>
            </Section>
            <RibbonEnd>
              <button aria-label="Pin ribbon"><svg width="12" height="12" viewBox="0 0 12 12"><path d="M1 2h10M6 3v5M1 10h10M3 8h6" stroke="#999" strokeWidth="2" /></svg></button>
            </RibbonEnd>
          </Ribbon>

          <DocumentBar>
            <NavButtons>
              <NavButton aria-label="Back"><svg width="18" height="14" viewBox="0 0 18 14"><path d="M1 7l7-6v3h9v6H8v3z" fill="#8fc3e4" stroke="#5788a8" /></svg></NavButton>
              <NavButton aria-label="Forward"><svg width="18" height="14" viewBox="0 0 18 14"><path d="M17 7l-6-5v3H2v5h9v3z" fill="#e4e4e4" /></svg></NavButton>
              <NavButton aria-label="Up"><svg width="18" height="14" viewBox="0 0 18 14"><path d="M9 0l6 6h-3v8H6V6H3z" fill="#e2e2e2" /></svg></NavButton>
            </NavButtons>
            <DocumentTab>mutual</DocumentTab>
          </DocumentBar>

          <Editor>
            <Palette>
              <PaletteButton aria-label="Hide browser"><svg width="11" height="11" viewBox="0 0 11 11"><circle cx="5.500" cy="5.500" r="4.500" fill="#fff" stroke="#555" /><path d="M3 5.500h5M5.500 3v5" stroke="#333" strokeWidth="1.500" /></svg></PaletteButton>
              <PaletteRule />
              {paletteTools.map((t) => <PaletteButton key={t.name} aria-label={t.name}><PaletteSvg>{t.icon}</PaletteSvg></PaletteButton>)}
              <PaletteSpacer />
              <PaletteButton aria-label="Screenshot"><PaletteSvg><path d="M0 4h15v9H0z" fill="#bbb" stroke="#777" /><circle cx="8" cy="8.500" r="4" fill="#eee" stroke="#444" /><circle cx="8" cy="8.500" r="2" fill="#555" /></PaletteSvg></PaletteButton>
              <PaletteButton aria-label="Viewmarks"><PaletteSvg><path d="M.5 2.500h14v12H.5z" fill="#eee" stroke="#888" /><path d="M2 1h5v8L4.500 7 2 9z" fill="#444" /><path d="M9 4h5v6H9zM2 11h5v3H2zM9 12h5v2H9z" fill="#999" /></PaletteSvg></PaletteButton>
              <PaletteButton aria-label="More tools"><svg width="11" height="11" viewBox="0 0 11 11"><path d="M1 1l4 4.500L1 10M6 1l4 4.500L6 10" fill="none" stroke="#444" /></svg></PaletteButton>
            </Palette>
            <EditorMain>
              <Breadcrumb>
                <FramedModelIcon />mutual
                <svg width="9" height="9" viewBox="-3 0 9 9"><path d="M1 0l5 4.500L1 9z" fill="#111" /></svg>
                <BreadcrumbFill />
                <button aria-label="Breadcrumb history"><Down /></button>
              </Breadcrumb>
              <CanvasRow>
                <Canvas>
                  <Diagram />
                  <Annotation>
                    <Handle /><Handle $right /><Handle $bottom /><Handle $right $bottom />
                    A Bidirectional Contactless Power Transfer System with<br />Dual-Side Power Flow Control
                  </Annotation>
                  <Watermark>
                    Team, Matlab Projects Codes &amp; Assignments<br />
                    www.matlabprojectscode.com<br />
                    INDIA, EUROPE, ASIA, CANADA, USA<br />
                    Watzapp/Call: +91 83000 15425<br />
                    Mail:matlabprojectscode@gmail.com
                  </Watermark>
                </Canvas>
                <VScroll><Chevron d="M1 6l3-4 3 4" /><VThumb /><Chevron d="M1 2l3 4 3-4" /></VScroll>
              </CanvasRow>
              <HScroll><Chevron d="M6 1L2 4l4 3" /><HThumb /><Chevron d="M2 1l4 3-4 3" /></HScroll>
            </EditorMain>
          </Editor>

          <StatusBar>
            <span>Ready</span><CanvasZoom>80%</CanvasZoom><Solver href="#solver">VariableStepDiscrete</Solver>
          </StatusBar>

          <Taskbar>
            <StartButton aria-label="Start"><svg width="16" height="16" viewBox="0 0 16 16"><path d="M0 2l7-1v6.500H0zM8 1l8-1v7.500H8zM0 8.500h7V15l-7-1zM8 8.500h8V16l-8-1z" fill="#fff" /></svg></StartButton>
            <SearchBox>
              <svg width="16" height="16" viewBox="0 0 16 16"><circle cx="10" cy="6" r="5" fill="none" stroke="#333" /><path d="M6.500 9.500L1 15" stroke="#333" /></svg>
              <SearchInput placeholder="Type here to search" aria-label="Search" />
            </SearchBox>
            {taskIcons.map((t) => (
              <TaskButton key={t.name} aria-label={t.name} $open={t.open} $current={t.current}>
                {t.icon}{t.badge && <Badge>{t.badge}</Badge>}
              </TaskButton>
            ))}
            <Tray>
              <svg width="12" height="8" viewBox="0 0 12 8"><path d="M1 7l5-5 5 5" fill="none" stroke="#dde5ec" /></svg>
              <svg width="16" height="12" viewBox="0 0 16 12"><path d="M4.500 2.500h10v7h-9z" fill="#e8eef3" stroke="#e8eef3" /><path d="M0 2h5v3l-2 2-2-2zM1 0v3M4 0v3M3 6v3h3" fill="none" stroke="#e8eef3" /></svg>
              <svg width="14" height="12" viewBox="0 0 14 12"><path d="M.5 4v4h2l4 3V1l-4 3zM9 4l4 4M13 4L9 8" fill="none" stroke="#dde5ec" /></svg>
              <svg width="14" height="14" viewBox="0 0 14 14"><path d="M1 9C3 5 8 2 12 2M3 11c2-4 5-6 9-6M6 12c1-2 3-4 6-4M8 13c1-1 2-2 4-2" fill="none" stroke="#b2bec8" /></svg>
              <svg width="16" height="12" viewBox="0 0 16 12"><path d="M4 11a3 3 0 0 1-.5-6A4 4 0 0 1 11 3a4 4 0 0 1 1 8z" fill="#eef3f7" /><path d="M8 10V6M6 7.500L8 5l2 2.500" fill="none" stroke="#1b2b3b" strokeWidth="1.500" /></svg>
              <SharedScreen size={16} />
              <TrayClock>
                <TrayText $width={24}>ENG<br />IN</TrayText>
                <TrayText $width={60}>3:59 PM<br />01-May-21</TrayText>
              </TrayClock>
              <ActionCenter aria-label="Notifications">
                <RedNote>
                  <svg width="54" height="50" viewBox="0 0 54 50">
                    <path d="M0 0h40v40H0z" fill="#e8272d" fillOpacity=".85" />
                    <path d="M3 12h34M5 16h30M2 20h36M4 24h32M2 30h36M4 34h32" stroke="#8d1b24" strokeDasharray="5 1 3 1" />
                    <path d="M15 26h16v10h-8l-4 4v-4h-4z" fill="#d9878c" /><path d="M17 29h12M17 32h12" stroke="#b22a32" />
                    <path d="M23 37h13v11H23z" fill="#59636d" fillOpacity=".7" /><path d="M29 38v6" stroke="#eee" strokeWidth="1.500" />
                  </svg>
                </RedNote>
              </ActionCenter>
            </Tray>
          </Taskbar>
        </AppWindow>
        <Caption>A Bidirectional Contactless Power Transfer System with Dual-Side Power Flow Control</Caption>
      </Page>
    </>
  );
}
